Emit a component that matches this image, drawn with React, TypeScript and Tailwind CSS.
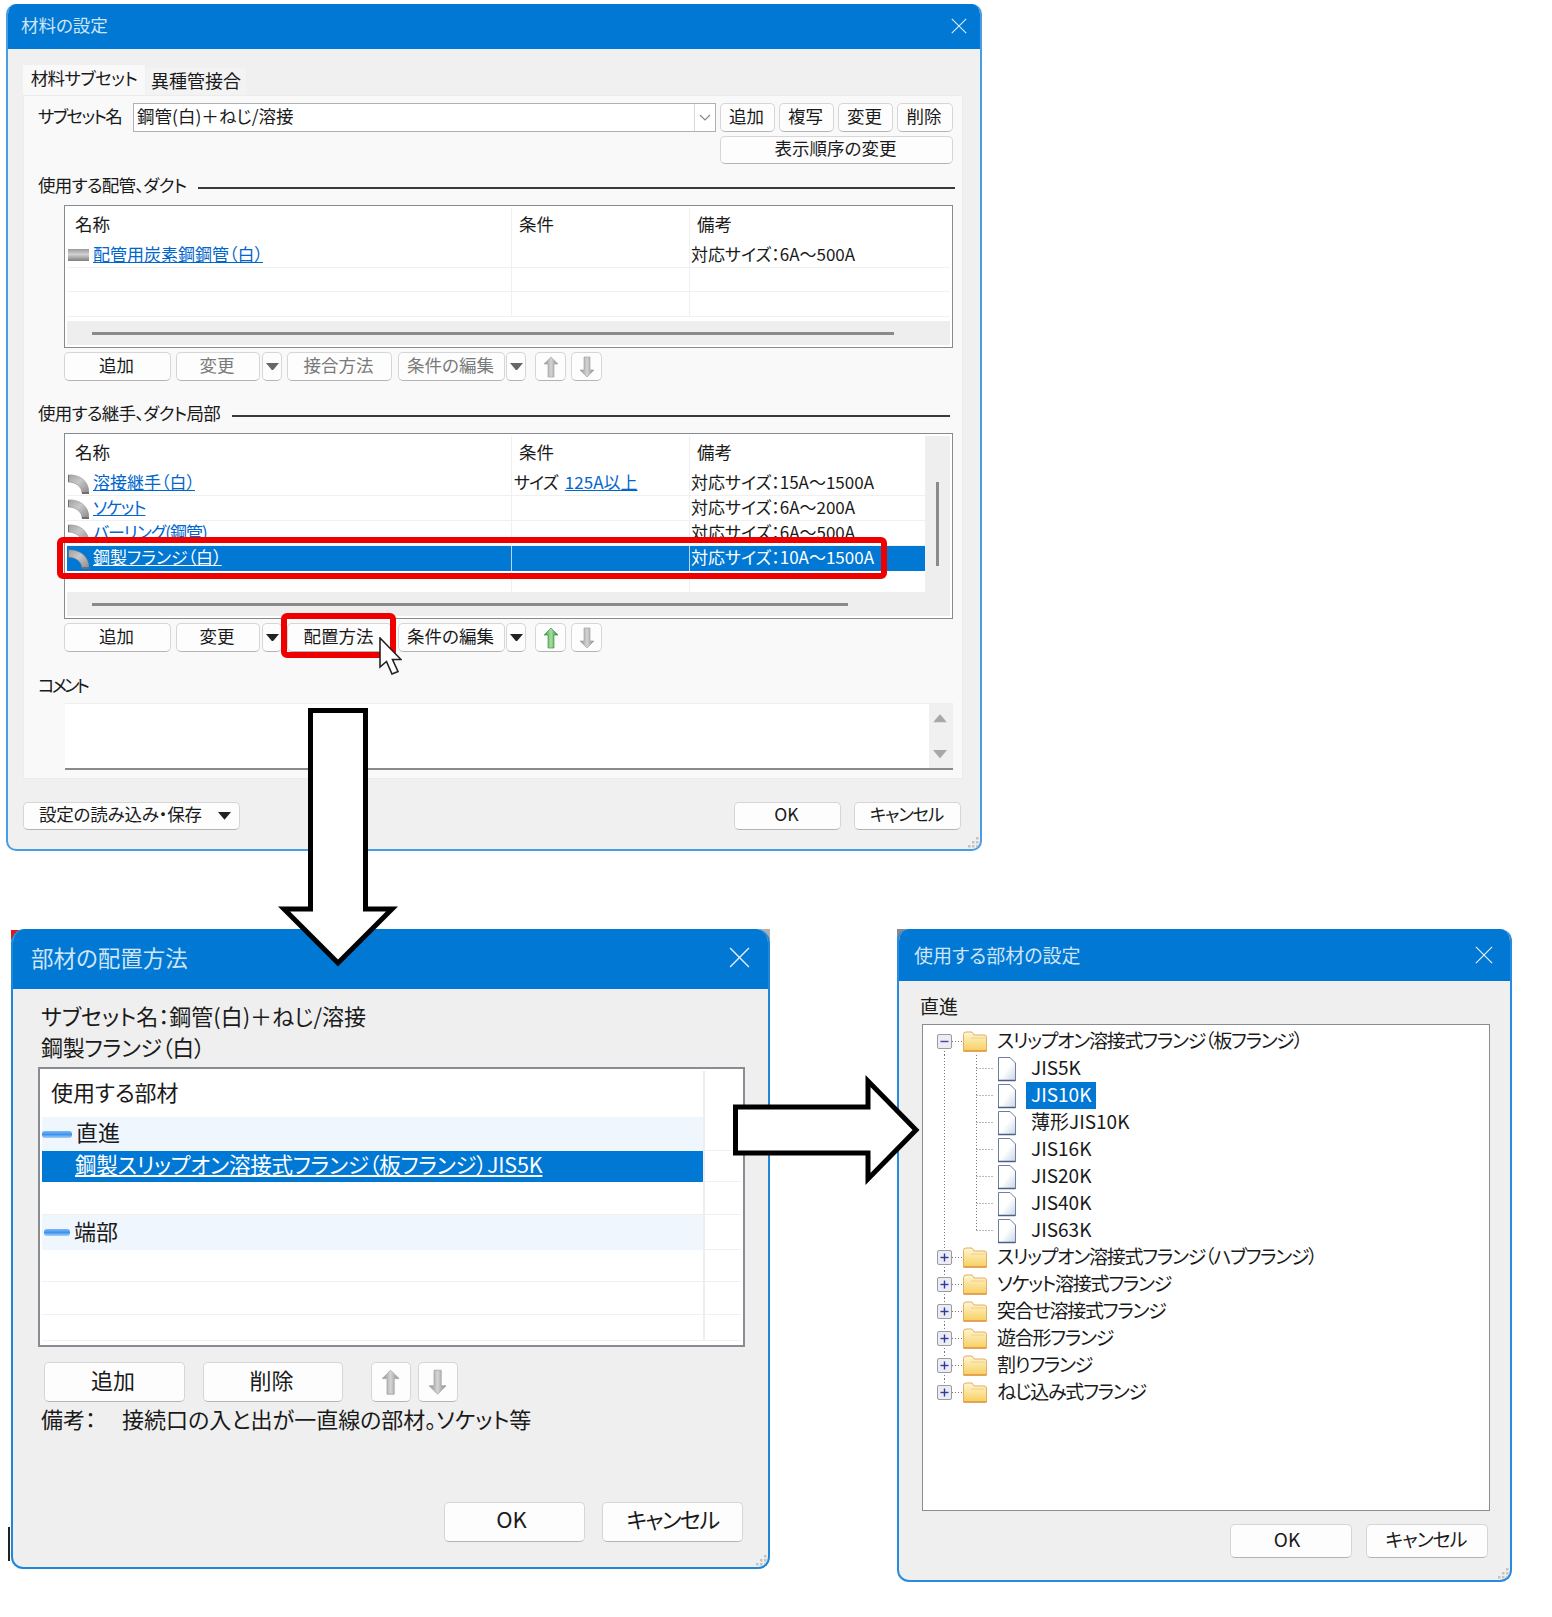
import type { ReactNode } from 'react'

type Row = {
  icon?: 'pipe' | 'elbow'
  name?: string
  tight?: boolean
  cond?: string
  condLink?: string
  note?: string
  selected?: boolean
  clip?: boolean
}

const pipeRows: Row[] = [
  { icon: 'pipe', name: '配管用炭素鋼鋼管（白）', note: '対応サイズ：6A～500A' },
  {},
  {},
]

const jointRows: Row[] = [
  { icon: 'elbow', name: '溶接継手（白）', cond: 'サイズ', condLink: '125A以上', note: '対応サイズ：15A～1500A' },
  { icon: 'elbow', name: 'ソケット', tight: true, note: '対応サイズ：6A～200A' },
  { icon: 'elbow', name: 'バーリング(鋼管)', tight: true, note: '対応サイズ：6A～500A', clip: true },
  { icon: 'elbow', name: '鋼製フランジ（白）', note: '対応サイズ：10A～1500A', selected: true },
]

const jisChildren = ['JIS5K', 'JIS10K', '薄形JIS10K', 'JIS16K', 'JIS20K', 'JIS40K', 'JIS63K']
const flangeGroups = [
  'スリップオン溶接式フランジ（ハブフランジ）',
  'ソケット溶接式フランジ',
  '突合せ溶接式フランジ',
  '遊合形フランジ',
  '割りフランジ',
  'ねじ込み式フランジ',
]

function Close({ size }: { size: number }) {
  return (
    <svg width={size} height={size} viewBox="0 0 20 20" fill="none" stroke="#e4f0fa" strokeWidth="1.3">
      <path d="M1 1L19 19M19 1L1 19" />
    </svg>
  )
}

function Grip() {
  return (
    <svg width="14" height="14" viewBox="0 0 14 14" fill="#c4c4c4">
      <rect x="10" y="2" width="2.5" height="2.5" />
      <rect x="6" y="6" width="2.5" height="2.5" />
      <rect x="10" y="6" width="2.5" height="2.5" />
      <rect x="2" y="10" width="2.5" height="2.5" />
      <rect x="6" y="10" width="2.5" height="2.5" />
      <rect x="10" y="10" width="2.5" height="2.5" />
    </svg>
  )
}

function Tri({ color = '#222', w = 13 }: { color?: string; w?: number }) {
  return (
    <svg width={w} height={w * 0.6} viewBox="0 0 10 6" fill={color}>
      <path d="M0 0H10L5 6Z" />
    </svg>
  )
}

function PipeIcon() {
  return (
    <svg width="21" height="14" viewBox="0 0 21 14" className="shrink-0">
      <defs>
        <linearGradient id="pipeFill" x1="0" y1="0" x2="0" y2="1">
          <stop offset="0" stopColor="#9a9a9a" />
          <stop offset="0.45" stopColor="#d2d2d2" />
          <stop offset="1" stopColor="#7e7e7e" />
        </linearGradient>
      </defs>
      <rect x="0" y="1" width="21" height="12" fill="url(#pipeFill)" />
    </svg>
  )
}

function ElbowIcon() {
  return (
    <svg width="21" height="20" viewBox="0 0 21 20" className="shrink-0">
      <defs>
        <linearGradient id="elbowFill" x1="1" y1="1" x2="0" y2="0">
          <stop offset="0" stopColor="#8a8a8a" />
          <stop offset="0.55" stopColor="#c8c8c8" />
          <stop offset="1" stopColor="#a0a0a0" />
        </linearGradient>
      </defs>
      <path d="M0 1C10 0 21 6 21 19H14C14 13 8 8 0 8Z" fill="url(#elbowFill)" stroke="#8c8c8c" strokeWidth="0.6" />
      <path d="M0 1V8" stroke="#6e6e6e" strokeWidth="2" />
      <path d="M14 19H21" stroke="#6e6e6e" strokeWidth="2" />
    </svg>
  )
}

function MoveArrow({ down, green, scale = 1 }: { down?: boolean; green?: boolean; scale?: number }) {
  const id = green ? 'moveGreen' : 'moveGray'
  return (
    <svg width={16 * scale} height={22 * scale} viewBox="0 0 16 22">
      <defs>
        <linearGradient id={id} x1="0" y1="0" x2="1" y2="0">
          <stop offset="0" stopColor={green ? '#2d8f3a' : '#8e8e8e'} />
          <stop offset="0.5" stopColor={green ? '#a8e0a0' : '#d4d4d4'} />
          <stop offset="1" stopColor={green ? '#2a7a34' : '#8a8a8a'} />
        </linearGradient>
      </defs>
      <path
        d={down ? 'M5 1H11V14H15L8 21L1 14H5Z' : 'M8 1L15 8H11V21H5V8H1Z'}
        fill={`url(#${id})`}
        stroke={green ? '#3c9a46' : '#a8a8a8'}
        strokeWidth="0.7"
      />
    </svg>
  )
}

function Btn({ className = '', dim, lift = 'pb-[3px] pr-[2px]', children }: { className?: string; dim?: boolean; lift?: string; children?: ReactNode }) {
  return (
    <div
      className={`flex shrink-0 items-center justify-center rounded-[5px] border border-[#d6d6d6] border-b-[#b4b4b4] bg-[#fdfdfd] ${lift} ${
        dim ? 'text-[#7a7a7a]' : 'text-[#1a1a1a]'
      } ${className}`}
    >
      {children}
    </div>
  )
}

function Heading({ text, className }: { text: string; className: string }) {
  return (
    <div className={`flex h-[20px] items-center ${className}`}>
      <span className="pb-[3px] tracking-[-0.7px] whitespace-nowrap">{text}</span>
      <div className="mt-[1px] ml-[12px] h-[2px] flex-1 bg-[#3a3a3a]" />
    </div>
  )
}

function TableRow({ row }: { row: Row }) {
  const sel = row.selected
  const sep = sel ? 'border-l border-l-[#b9d7f0]' : 'border-l border-l-[#f0f0f0]'
  const link = `underline ${sel ? 'text-white' : 'text-[#0066cc]'} ${row.tight ? 'tracking-[-1px]' : ''}`
  return (
    <div
      className={`flex h-[25px] text-[17px] leading-[21px] ${
        sel ? 'bg-[#0078d4] text-white' : 'border-b border-b-[#f0f0f0] text-[#1a1a1a]'
      }`}
    >
      <div className={`flex w-[444px] shrink-0 items-start gap-[4px] pl-[1px] ${row.clip ? 'h-[16px] overflow-hidden' : ''}`}>
        <div className={`shrink-0 ${row.icon === 'pipe' ? 'mt-[5px]' : 'mt-[3px]'}`}>
          {row.icon === 'pipe' && <PipeIcon />}
          {row.icon === 'elbow' && <ElbowIcon />}
        </div>
        {row.name && <span className={link}>{row.name}</span>}
      </div>
      <div className={`flex w-[178px] shrink-0 gap-[7px] pl-[2px] ${sep}`}>
        {row.cond && <span className="tracking-[-0.8px]">{row.cond}</span>}
        {row.condLink && <span className="text-[#0066cc] underline">{row.condLink}</span>}
      </div>
      <div className={`flex-1 pl-[1px] whitespace-nowrap ${sep} ${row.clip ? 'h-[16px] overflow-hidden' : ''}`}>{row.note}</div>
    </div>
  )
}

function TableHead() {
  return (
    <div className="flex h-[35px] text-[17.5px] leading-[31px]">
      <div className="w-[444px] shrink-0 pl-[8px]">名称</div>
      <div className="h-full w-[178px] shrink-0 border-l border-l-[#f0f0f0] pl-[7px]">条件</div>
      <div className="h-full flex-1 border-l border-l-[#f0f0f0] pl-[7px]">備考</div>
    </div>
  )
}

function HBar({ width }: { width: string }) {
  return (
    <div className="flex h-[24px] items-center bg-[#eeeeee] pl-[25px]">
      <div className={`h-[3px] bg-[#8a8a8a] ${width}`} />
    </div>
  )
}

function MainDialog() {
  return (
    <div className="absolute top-[4px] left-[6px] flex h-[847px] w-[976px] flex-col overflow-hidden rounded-[10px] border-x-2 border-b-2 border-x-[#4a9de2] border-b-[#4a9de2] bg-[#f0f0f0] text-[17.5px] text-[#1a1a1a]">
      <div className="flex h-[45px] shrink-0 items-center justify-between bg-[#0078d4] pr-[13px] pb-[2px] pl-[13px] text-[#cfe4f6]">
        <span>材料の設定</span>
        <Close size={16} />
      </div>
      <div className="flex flex-col pr-[17px] pl-[15px]">
        {/* tabs */}
        <div className="mt-[16px] flex h-[30px] items-end">
          <div className="flex h-[30px] w-[122px] items-center justify-center bg-[#f9f9f9] pb-[4px] tracking-[-0.6px]">材料サブセット</div>
          <div className="ml-[1px] flex h-[27px] w-[100px] items-center justify-center bg-[#f3f3f3] pb-[3px] text-[18px]">異種管接合</div>
        </div>
        <div className="flex h-[684px] flex-col border border-[#ececec] bg-[#f9f9f9] pr-[9px] pl-[14px]">
          <div className="mt-[7px] flex h-[29px] items-center">
            <span className="w-[95px] shrink-0 pb-[3px] tracking-[-1.7px] whitespace-nowrap">サブセット名</span>
            <div className="flex h-[29px] w-[583px] shrink-0 items-center border border-[#b0b0b0] bg-white pl-[3px]">
              <span className="flex-1 pb-[3px]">鋼管(白)＋ねじ/溶接</span>
              <div className="flex h-full w-[21px] items-center justify-center border-l border-l-[#d8d8d8]">
                <svg width="12" height="8" viewBox="0 0 12 8" fill="none" stroke="#888" strokeWidth="1.2">
                  <path d="M1 1L6 6L11 1" />
                </svg>
              </div>
            </div>
            <Btn className="ml-[4px] h-[29px] w-[55px]">追加</Btn>
            <Btn className="ml-[4px] h-[29px] w-[55px]">複写</Btn>
            <Btn className="ml-[4px] h-[29px] w-[55px]">変更</Btn>
            <Btn className="ml-[4px] h-[29px] w-[56px]">削除</Btn>
          </div>
          <div className="mt-[4px] flex justify-end">
            <Btn className="h-[28px] w-[233px]">表示順序の変更</Btn>
          </div>

          <Heading text="使用する配管、ダクト" className="mt-[13px] -mr-[2px]" />
          <div className="mt-[8px] ml-[26px] flex h-[143px] flex-col border border-[#868a91] bg-white p-[2px]">
            <TableHead />
            {pipeRows.map((r, i) => (
              <TableRow key={i} row={r} />
            ))}
            <div className="h-[4px]" />
            <HBar width="w-[802px]" />
          </div>
          <div className="mt-[4px] ml-[26px] flex h-[29px] items-center">
            <Btn className="h-[29px] w-[107px]">追加</Btn>
            <Btn dim className="ml-[5px] h-[29px] w-[84px]">変更</Btn>
            <Btn lift="" className="ml-[2px] h-[29px] w-[20px]"><Tri color="#666" /></Btn>
            <Btn dim className="ml-[5px] h-[29px] w-[105px]">接合方法</Btn>
            <Btn dim className="ml-[6px] h-[29px] w-[107px]">条件の編集</Btn>
            <Btn lift="" className="ml-[1px] h-[29px] w-[20px]"><Tri color="#666" /></Btn>
            <Btn lift="" className="ml-[9px] h-[29px] w-[31px] bg-[#f9f9f9]"><MoveArrow /></Btn>
            <Btn lift="" className="ml-[5px] h-[29px] w-[31px] bg-[#f9f9f9]"><MoveArrow down /></Btn>
          </div>

          <Heading text="使用する継手、ダクト局部" className="mt-[24px] pr-[3px]" />
          <div className="mt-[8px] ml-[26px] flex h-[186px] flex-col border border-[#868a91] bg-white p-[2px]">
            <div className="flex h-[157px]">
              <div className="flex w-[858px] shrink-0 flex-col">
                <TableHead />
                {jointRows.map((r, i) => (
                  <TableRow key={i} row={r} />
                ))}
                <div className="flex flex-1">
                  <div className="w-[444px] shrink-0" />
                  <div className="w-[178px] shrink-0 border-l border-l-[#f0f0f0]" />
                  <div className="flex-1 border-l border-l-[#f0f0f0]" />
                </div>
              </div>
              <div className="flex flex-1 justify-center bg-[#eeeeee] pt-[46px]">
                <div className="h-[84px] w-[3px] bg-[#8a8a8a]" />
              </div>
            </div>
            <HBar width="w-[756px]" />
          </div>
          <div className="mt-[4px] ml-[26px] flex h-[29px] items-center">
            <Btn className="h-[29px] w-[107px]">追加</Btn>
            <Btn className="ml-[5px] h-[29px] w-[84px]">変更</Btn>
            <Btn lift="" className="ml-[2px] h-[29px] w-[20px]"><Tri /></Btn>
            <Btn className="ml-[5px] h-[29px] w-[105px] border-[#2a8ae0] bg-[#dcebfa]">配置方法</Btn>
            <Btn className="ml-[6px] h-[29px] w-[107px]">条件の編集</Btn>
            <Btn lift="" className="ml-[1px] h-[29px] w-[20px]"><Tri /></Btn>
            <Btn lift="" className="ml-[9px] h-[29px] w-[31px]"><MoveArrow green /></Btn>
            <Btn lift="" className="ml-[5px] h-[29px] w-[31px] bg-[#f9f9f9]"><MoveArrow down /></Btn>
          </div>

          <div className="mt-[23px] flex h-[20px] items-center tracking-[-3px]">コメント</div>
          <div className="mt-[8px] ml-[27px] flex h-[67px] justify-end border-t border-b-2 border-t-[#eeeeee] border-b-[#8a8a8a] bg-white">
            <div className="flex h-full w-[24px] flex-col items-center justify-between bg-[#f0f0f0] py-[10px] pr-[3px]">
              <div className="rotate-180"><Tri color="#a8a8a8" w={14} /></div>
              <Tri color="#a8a8a8" w={14} />
            </div>
          </div>
        </div>
        <div className="mt-[23px] flex h-[28px] items-center pr-[2px]">
          <Btn lift="" className="h-[28px] w-[217px] pr-[8px] pl-[15px]">
            <div className="flex w-full items-center justify-between">
              <span className="pb-[3px] tracking-[-0.2px]">設定の読み込み・保存</span>
              <Tri />
            </div>
          </Btn>
          <Btn className="ml-auto h-[28px] w-[107px]">OK</Btn>
          <Btn className="ml-[13px] h-[28px] w-[107px] tracking-[-1.2px]">キャンセル</Btn>
        </div>
      </div>
      <div className="absolute right-0 bottom-0"><Grip /></div>
    </div>
  )
}

const placementRows = [
  { h: 'h-[34px]', label: '直進', group: true, bar: 'w-[30px]' },
  { h: 'h-[31px]', selected: true, label: '鋼製スリップオン溶接式フランジ（板フランジ）JIS5K' },
  { h: 'h-[33px]' },
  { h: 'h-[35px]', label: '端部', group: true, bar: 'w-[26px] ml-[2px]' },
  { h: 'h-[32px]' },
  { h: 'h-[33px]' },
  { h: 'h-[26px]' },
]

function PlacementDialog() {
  return (
    <div className="absolute top-[929px] left-[11px] flex h-[640px] w-[759px] flex-col overflow-hidden rounded-t-[14px] rounded-b-[12px] border-x-2 border-b-2 border-x-[#1f86d8] border-b-[#1f86d8] bg-[#efefef] text-[22px] text-[#1a1a1a]">
      <div className="flex h-[60px] shrink-0 items-center justify-between bg-[#0078d4] pr-[18px] pb-[3px] pl-[18px] text-[#cfe4f6]">
        <span className="text-[22.5px]">部材の配置方法</span>
        <Close size={21} />
      </div>
      <div className="flex flex-1 flex-col pr-[23px] pl-[28px]">
        <div className="mt-[12px] h-[31px] leading-[28px] whitespace-nowrap">サブセット名：鋼管(白)＋ねじ/溶接</div>
        <div className="h-[31px] leading-[29px] tracking-[-0.3px] whitespace-nowrap">鋼製フランジ（白）</div>
        <div className="mt-[4px] -ml-[3px] flex h-[280px] flex-col border-2 border-[#888c93] bg-white p-[2px]">
          <div className="flex h-[46px] shrink-0">
            <div className="flex w-[661px] shrink-0 items-center pb-[6px] pl-[9px]">使用する部材</div>
            <div className="border-l-2 border-l-[#eeeeee]" />
          </div>
          {placementRows.map((r, i) => (
            <div key={i} className={`flex shrink-0 ${r.h}`}>
              <div
                className={`flex w-[661px] shrink-0 items-center ${
                  r.selected ? 'bg-[#0078d4] text-white' : r.group ? 'bg-[#eff6fd]' : 'border-b border-b-[#f0f0f0]'
                }`}
              >
                {r.group && <div className={`h-[7px] rounded-[3px] bg-gradient-to-b from-[#7ab8f5] via-[#3b93f0] to-[#a8d0f5] ${r.bar}`} />}
                {r.label && (
                  <span className={`pb-[5px] whitespace-nowrap ${r.selected ? 'ml-[33px] text-[21.5px] tracking-[-0.2px] underline' : 'ml-[4px]'}`}>
                    {r.label}
                  </span>
                )}
              </div>
              <div className="flex-1 border-b border-l-2 border-b-[#f0f0f0] border-l-[#eeeeee]" />
            </div>
          ))}
        </div>
        <div className="mt-[15px] flex h-[40px] items-center">
          <Btn lift="pb-[6px] pr-[3px]" className="ml-[3px] h-[40px] w-[141px]">追加</Btn>
          <Btn lift="pb-[6px] pr-[3px]" className="ml-[18px] h-[40px] w-[140px]">削除</Btn>
          <Btn lift="" className="ml-[28px] h-[40px] w-[40px] bg-[#f7f7f7]"><MoveArrow scale={1.2} /></Btn>
          <Btn lift="" className="ml-[7px] h-[40px] w-[40px] bg-[#f7f7f7]"><MoveArrow down scale={1.2} /></Btn>
        </div>
        <div className="mt-[4px] flex h-[32px] items-center pb-[7px]">
          <span className="w-[81px] shrink-0 whitespace-nowrap">備考：</span>
          <span className="whitespace-nowrap">接続口の入と出が一直線の部材。ソケット等</span>
        </div>
        <div className="mt-auto mb-[25px] flex justify-end pr-[2px]">
          <Btn lift="pb-[7px] pr-[6px]" className="h-[40px] w-[141px]">OK</Btn>
          <Btn lift="pb-[7px]" className="ml-[17px] h-[40px] w-[141px] tracking-[-1.5px]">キャンセル</Btn>
        </div>
      </div>
      <div className="absolute right-0 bottom-0"><Grip /></div>
    </div>
  )
}

function Folder() {
  return (
    <g transform="translate(40 3)">
      <defs>
        <linearGradient id="folderFill" x1="0" y1="0" x2="0" y2="1">
          <stop offset="0" stopColor="#fff6d4" />
          <stop offset="1" stopColor="#f6cf5f" />
        </linearGradient>
      </defs>
      <path d="M0.5 3.5Q0.5 1 3 1H9L11 4H21Q23.5 4 23.5 6V20H0.5Z" fill="url(#folderFill)" stroke="#e5ad62" />
      <path d="M8 7H22" stroke="#f0d080" />
      <path d="M0.5 20H23.5" stroke="#e09a48" strokeWidth="1.6" />
    </g>
  )
}

function ExpandBox({ open }: { open?: boolean }) {
  return (
    <g>
      <rect x="14.5" y="6.5" width="14" height="14" rx="1.5" fill="#ececf2" stroke="#9a9aa4" />
      <path d="M17.5 13.5H25.5" stroke={open ? '#444a9a' : '#2a3aa0'} strokeWidth="1.4" />
      {!open && <path d="M21.5 9.5V17.5" stroke="#2a3aa0" strokeWidth="1.4" />}
    </g>
  )
}

const dotted = { stroke: '#777', strokeDasharray: '1 2', strokeWidth: 1 }

function TreeRoot({ label, open, last }: { label: string; open?: boolean; last?: boolean }) {
  return (
    <div className="flex h-[27px] items-center whitespace-nowrap">
      <svg width="74" height="27" viewBox="0 0 74 27" className="shrink-0">
        {!open && <path d="M21.5 0V6" {...dotted} />}
        {!last && <path d="M21.5 20V27" {...dotted} />}
        <path d="M29 13.5H40" {...dotted} />
        <ExpandBox open={open} />
        <Folder />
      </svg>
      <span className="pb-[3px] tracking-[-1.25px]">{label}</span>
    </div>
  )
}

function TreeChild({ label, selected, last }: { label: string; selected?: boolean; last?: boolean }) {
  return (
    <div className="flex h-[27px] items-center whitespace-nowrap">
      <svg width="103" height="27" viewBox="0 0 103 27" className="shrink-0">
        <defs>
          <linearGradient id="fileFill" x1="0" y1="0" x2="1" y2="1">
            <stop offset="0.5" stopColor="#ffffff" />
            <stop offset="1" stopColor="#c8d4e6" />
          </linearGradient>
        </defs>
        <path d="M21.5 0V27" {...dotted} />
        <path d={last ? 'M53.5 0V13' : 'M53.5 0V27'} {...dotted} />
        <path d="M53.5 13.5H71" {...dotted} />
        <path d="M75.5 2.5H87L92.5 8V25.5H75.5Z" fill="url(#fileFill)" stroke="#6d7f9c" />
        <path d="M75 25.5H92.5" stroke="#4c5f82" strokeWidth="1.5" />
      </svg>
      <span className={`flex h-[27px] items-center px-[5px] pb-[3px] ${selected ? 'bg-[#0078d4] text-white' : ''}`}>{label}</span>
    </div>
  )
}

function MemberDialog() {
  return (
    <div className="absolute top-[929px] left-[897px] flex h-[653px] w-[615px] flex-col overflow-hidden rounded-t-[12px] rounded-b-[12px] border-x-2 border-b-2 border-x-[#2a8ae0] border-b-[#2a8ae0] bg-[#efefef] text-[19px] text-[#1a1a1a]">
      <div className="flex h-[52px] shrink-0 items-center justify-between bg-[#0078d4] pr-[17px] pl-[15px] text-[#cfe4f6]">
        <span>使用する部材の設定</span>
        <Close size={18} />
      </div>
      <div className="flex flex-1 flex-col pr-[20px] pl-[23px]">
        <div className="mt-[12px] -ml-[2px] flex h-[31px] items-center pb-[4px]">直進</div>
        <div className="flex h-[487px] flex-col border border-[#888c93] bg-white pt-[3px]">
          <TreeRoot label="スリップオン溶接式フランジ（板フランジ）" open />
          {jisChildren.map((c, i) => (
            <TreeChild key={c} label={c} selected={c === 'JIS10K'} last={i === jisChildren.length - 1} />
          ))}
          {flangeGroups.map((g, i) => (
            <TreeRoot key={g} label={g} last={i === flangeGroups.length - 1} />
          ))}
        </div>
        <div className="mt-[13px] flex justify-end pr-[2px]">
          <Btn lift="pb-[4px] pr-[8px]" className="h-[34px] w-[122px]">OK</Btn>
          <Btn lift="pb-[4px] pr-[2px]" className="ml-[14px] h-[34px] w-[122px] tracking-[-1px]">キャンセル</Btn>
        </div>
      </div>
      <div className="absolute right-0 bottom-0"><Grip /></div>
    </div>
  )
}

export default function App() {
  return (
    <div className="relative h-[1617px] w-[1552px] overflow-hidden bg-white font-['Noto_Sans_CJK_JP','Noto_Sans',sans-serif] [font-feature-settings:'palt']">
      {/* leftovers of the capture behind the window corners */}
      <div className="absolute top-[930px] left-[11px] h-[10px] w-[10px] bg-[#e01818]" />
      <div className="absolute top-[929px] left-[760px] h-[10px] w-[10px] bg-[#b0b0b0]" />
      <div className="absolute top-[929px] left-[897px] h-[10px] w-[10px] bg-[#8a8a8a]" />
      <div className="absolute top-[1527px] left-[8px] h-[34px] w-[2px] bg-[#222]" />

      <MainDialog />
      <PlacementDialog />
      <MemberDialog />

      {/* callouts over the screenshots */}
      <div className="absolute top-[537px] left-[57px] h-[42px] w-[830px] rounded-[6px] border-[6px] border-[#ee0000]" />
      <div className="absolute top-[613px] left-[281px] h-[45px] w-[115px] rounded-[6px] border-[6px] border-[#ee0000]" />
      <svg className="absolute top-[637px] left-[378px]" width="24" height="40" viewBox="0 0 24 40">
        <path d="M2 1V30L8.5 24.5L14 37L20 34.5L14.5 22.5H23Z" fill="#fff" stroke="#222" strokeWidth="1.6" />
      </svg>
      <svg className="absolute top-[706px] left-[278px]" width="120" height="264" viewBox="0 0 120 264">
        <path d="M32.5 4.5H87.5V203H114L60 257L6 203H32.5Z" fill="#fff" stroke="#000" strokeWidth="5" />
      </svg>
      <svg className="absolute top-[1074px] left-[730px]" width="192" height="112" viewBox="0 0 192 112">
        <path d="M5.5 33H138V7L186 56L138 105V79H5.5Z" fill="#fff" stroke="#000" strokeWidth="5" />
      </svg>
    </div>
  )
}
